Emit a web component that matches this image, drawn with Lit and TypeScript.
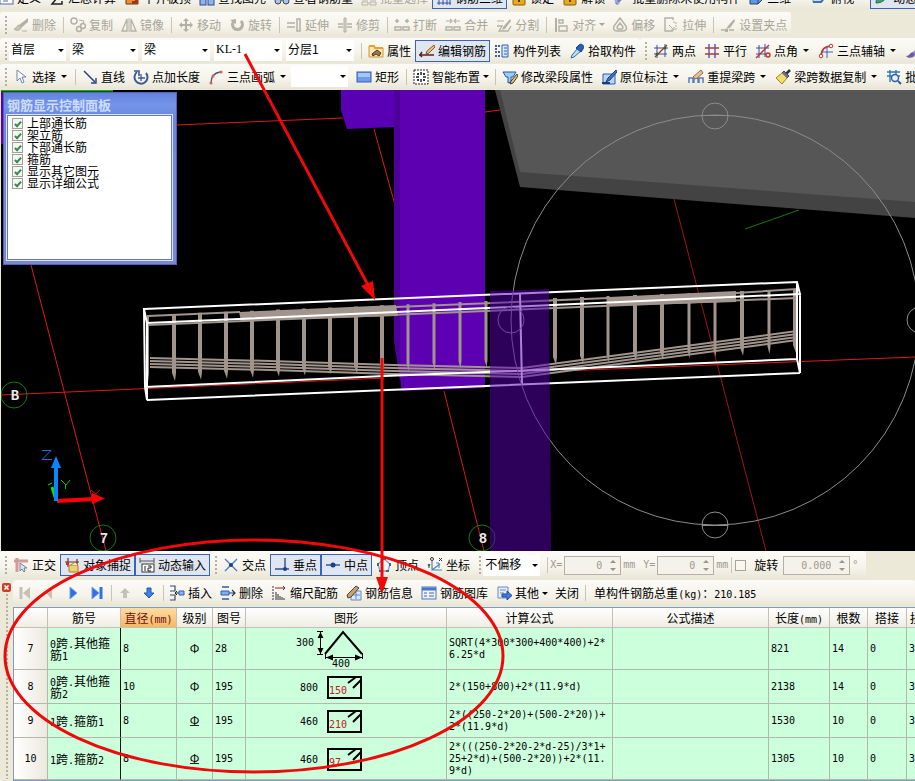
import { LitElement, html, svg, css, nothing, type TemplateResult, type SVGTemplateResult } from "lit";
import { customElement, property } from "lit/decorators.js";
import { classMap } from "lit/directives/class-map.js";

/* ---------- icons, each on a 16 x 16 grid ---------- */
const G = "#b3b0a4";
const B = "#2f5fb8";
const R = "#c03434";
const K = "#333333";

const lock = svg`<path d="M4 8V4a4 4 0 0 1 8 0v4" fill="none" stroke="#8a7430" stroke-width="2"/><rect x="2" y="6" width="12" height="9" rx="1" fill="#e9a91c" stroke="#8a5a08"/><path d="M8 9v3" stroke="#5a3a00" stroke-width="2"/>`;

const icons: Record<string, SVGTemplateResult> = {
  define: svg`<rect x="2" y="2" width="13" height="12" fill="#fff" stroke="#4a68b0"/><path d="M5 5h7M5 8h7M5 11h5" stroke="#4a68b0"/>`,
  sum: svg`<path d="M13 4V2H3l5 6-5 6h10v-3" fill="none" stroke="#222" stroke-width="1.5"/>`,
  level: svg`<path d="M2 14V9h4V6h4V3h4v11z" fill="#e89038" stroke="#7a3010"/><path d="M2 14h6v-3h3V8h3v6z" fill="#a03818"/>`,
  find: svg`<rect x="1" y="5" width="6" height="10" fill="#8fb4e8" stroke="#2a4a98"/><rect x="9" y="5" width="6" height="10" fill="#8fb4e8" stroke="#2a4a98"/><path d="M7 8h2" stroke="#2a4a98" stroke-width="2"/>`,
  glasses: svg`<circle cx="4" cy="11" r="3" fill="#a8c4ea" stroke="#444"/><circle cx="12" cy="11" r="3" fill="#a8c4ea" stroke="#444"/><path d="M7 10h2" stroke="#444"/>`,
  batch: svg`<path d="M1 6h6v4H1zM9 6h6v4H9zM1 12h6v3H1zM9 12h6v3H9z" fill="none" stroke="${G}"/>`,
  cage: svg`<path d="M1 5h14M1 13h14M3 3v12M7 3v12M11 3v12M14 3v12" fill="none" stroke="#3a4ea8"/>`,
  lock,
  wand: svg`<path d="M3 14l9-10" stroke="#7080b0" stroke-width="3"/><path d="M2 10l4 4" stroke="#a8a0d0" stroke-width="2"/>`,
  cube: svg`<path d="M2 6l4-4h8v8l-4 4H2z" fill="#5f98d8" stroke="#22487e"/><path d="M2 6h8l4-4M10 6v8" fill="none" stroke="#22487e"/>`,
  topview: svg`<path d="M2 8l5-5h8l-5 9H2z" fill="#cfe0f4" stroke="#6a88b8"/><path d="M2 12h8l5-6" fill="none" stroke="#3f6fae" stroke-width="2"/>`,
  orbit: svg`<path d="M2 13C2 6 8 3 14 2c-1 7-5 11-12 11z" fill="#40a070" stroke="#207048"/>`,

  erase: svg`<path d="M15 1L6 8l2 3 7-6z" fill="${G}"/><path d="M6 8c-2 0-2 3-5 4 2 2 6 2 7-1z" fill="#c6c3b7" stroke="${G}"/><path d="M9 14h5" stroke="${G}"/>`,
  copy: svg`<circle cx="4" cy="4" r="3" fill="none" stroke="${G}" stroke-width="1.5"/><circle cx="9" cy="12" r="2.5" fill="none" stroke="${G}" stroke-width="1.5"/><circle cx="13" cy="9" r="2.5" fill="none" stroke="${G}" stroke-width="1.5"/><path d="M9 3l5 1-1 3" fill="none" stroke="${G}"/>`,
  mirror: svg`<path d="M6 2v12H1zM10 2v12h5z" fill="none" stroke="${G}" stroke-width="1.3"/><path d="M8 1v14" stroke="${G}"/>`,
  move: svg`<path d="M8 1l3 3H9v3h3V5l3 3-3 3V9H9v3h2l-3 3-3-3h2V9H4v2L1 8l3-3v2h3V4H5z" fill="${G}"/>`,
  rotate: svg`<path d="M5 4a5 5 0 1 0 7 0" fill="none" stroke="${G}" stroke-width="3"/><path d="M1 3l6-1v5z" fill="${G}"/>`,
  extend: svg`<path d="M1 6h8M1 10h8" stroke="${G}" stroke-width="1.5"/><path d="M11 2h3v12h-3z" fill="none" stroke="${G}" stroke-width="1.5"/>`,
  trim: svg`<path d="M1 7h5M1 10h5M10 7h5M10 10h5" stroke="${G}" stroke-width="1.4"/><path d="M7 1h2v14H7z" fill="#d8d5ca" stroke="${G}"/>`,
  split: svg`<path d="M1 4h4M11 4h4M3 2v4M13 2v4" stroke="${G}" stroke-width="1.5"/><path d="M1 10h6v3H1zM9 10h6v3H9z" fill="none" stroke="${G}" stroke-width="1.4"/>`,
  merge: svg`<path d="M1 4h5M10 4h5M5 2l2 2-2 2M11 2L9 4l2 2" fill="none" stroke="${G}" stroke-width="1.2"/><path d="M1 10h6v3H1zM9 10h6v3H9z" fill="none" stroke="${G}" stroke-width="1.4"/>`,
  divide: svg`<path d="M1 9h5l-3 5h9l3-5" fill="none" stroke="${G}" stroke-width="1.3"/><path d="M14 2L7 10l-1 3 3-1 6-8z" fill="${G}"/><path d="M1 4h7" stroke="${G}"/>`,
  align: svg`<path d="M3 1v14" stroke="${G}" stroke-width="2"/><path d="M6 3h4v3H6zM6 9h8v5H6z" fill="none" stroke="${G}" stroke-width="1.4"/>`,
  offset: svg`<path d="M8 1l6 8c1 3 0 5-3 5H5c-3 0-4-2-3-5z" fill="none" stroke="${G}" stroke-width="1.5"/><path d="M8 6l3 4c0 1 0 2-1 2H6c-1 0-1-1-1-2z" fill="none" stroke="${G}" stroke-width="1.5"/>`,
  stretch: svg`<path d="M10 3V1H2v13h8" fill="none" stroke="${G}" stroke-width="1.4"/><path d="M10 5h3v9" fill="none" stroke="${G}" stroke-dasharray="2 1"/><path d="M6 8l5 5M11 10v3H8" fill="none" stroke="${G}"/>`,
  grip: svg`<path d="M14 2L8 9l-2 3 4-1 5-7z" fill="${G}"/><path d="M1 13h4M9 13h5" stroke="${G}" stroke-width="1.4"/><path d="M5 12h3v3H5z" fill="${G}"/>`,

  props: svg`<path d="M1 3h5l1 2h8v9H1z" fill="#fbe7b4" stroke="#d8902c"/><path d="M1 3h5l1 2h8" fill="none" stroke="#e8a030" stroke-width="2"/><path d="M4 11l5-4 4 3-2 3-3-2-3 2z" fill="#9a7a50" stroke="#4a3620"/>`,
  editbar: svg`<path d="M15 2L8 8l-1 3 3-1 6-6z" fill="#efc070" stroke="#8a5a28"/><path d="M0 12h15M3 9l-2 3 2 2" fill="none" stroke="#5a2020" stroke-width="1.5"/>`,
  list: svg`<path d="M8 2h6v12H8z" fill="#d8e6fa" stroke="${B}"/><path d="M10 5h3M10 8h3M10 11h3" stroke="${B}"/><path d="M1 3h2M4 3h2M1 6h2M1 9h2M4 9h2M1 13h2M4 13h2" stroke="#3a5ea8" stroke-width="2"/>`,
  pick: svg`<path d="M9 5l3 3-7 6-3 1 1-3z" fill="#b8dcf4" stroke="#2f6cb0"/><path d="M10 2c2-2 6 0 4 4l-2 3-5-4z" fill="#2562b8" stroke="#153f80"/>`,
  twopt: svg`<path d="M4 2v13M12 1v13M1 5h14M1 11h13" stroke="#3b4f9c"/><path d="M2 14L14 2" stroke="#a03030" stroke-width="1.3"/><circle cx="12" cy="5" r="1.5" fill="#2c6a2c"/><circle cx="4" cy="11" r="1.5" fill="#2c6a2c"/>`,
  parallel: svg`<path d="M5 1v14M11 1v14" stroke="#3b5fc0" stroke-width="1.4"/><path d="M1 5h14M1 11h14" stroke="${R}" stroke-width="1.5"/>`,
  ptangle: svg`<path d="M4 2v13M10 1v13M1 5h13M1 11h10" stroke="#3b4f9c"/><path d="M1 15L14 2" stroke="${R}" stroke-width="1.4"/><circle cx="13" cy="12" r="2" fill="none" stroke="${R}" stroke-width="1.4"/>`,
  threept: svg`<path d="M3 14C3 7 6 3 14 3" fill="none" stroke="${R}" stroke-width="1.6"/><path d="M9 4v11M3 9h12" stroke="#3b5fc0"/><circle cx="3" cy="13" r="1.8" fill="#fff" stroke="${R}"/><circle cx="13" cy="3" r="1.8" fill="#fff" stroke="${R}"/>`,
  brushx: svg`<path d="M15 3L8 9l2 3 6-6z" fill="#9088b8"/><path d="M8 9c-3 0-3 4-7 4 2 3 8 2 9-1z" fill="#6a5aa8"/>`,

  cursor: svg`<path d="M4 1v11l3-3 2 5 2-1-2-5h4z" fill="#fff" stroke="#6d83b4"/>`,
  line: svg`<path d="M2 2l11 11" stroke="#2b3f86" stroke-width="1.5"/><path d="M14 9v5H9" fill="none" stroke="#2b3f86" stroke-width="1.4"/>`,
  ptlen: svg`<path d="M4 3a6.500 6.500 0 1 0 9 1" fill="none" stroke="#3b5a92" stroke-width="2"/><path d="M1 2h5v5" fill="none" stroke="#3b5a92" stroke-width="1.6"/><path d="M8 5v7M5 9h7" stroke="#3b5a92" stroke-width="1.3"/>`,
  arc: svg`<path d="M3 14C3 8 6 4 12 3" fill="none" stroke="#44538c" stroke-width="1.3"/><circle cx="3" cy="14" r="1.5" fill="#e06050"/><circle cx="5" cy="7" r="1.5" fill="#e06050"/><circle cx="13" cy="3" r="1.500" fill="#e06050"/>`,
  rect: svg`<rect x="1" y="3" width="14" height="10" fill="#6f9cea" stroke="#2f5fb8"/><path d="M2 4h12v4H2z" fill="#a8c4f6"/>`,
  smart: svg`<rect x="1" y="1" width="14" height="14" fill="#fff" stroke="#222" stroke-dasharray="2 1"/><path d="M8 3v3M8 10v3M3 8h3M10 8h3" stroke="#222" stroke-width="1.5"/><path d="M4 4h2v2H4zM10 4h2v2h-2zM4 10h2v2H4zM10 10h2v2h-2z" fill="#333"/>`,
  beamprop: svg`<path d="M1 3h13l-3 5H9v5l-3 1V8H4z" fill="#9ecbf2" stroke="#2b5a9e"/><path d="M15 5l-6 7-1 3 3-1 5-7z" fill="#e8c070" stroke="#3a3a3a"/>`,
  mark: svg`<path d="M2 5h12v10H2z" fill="#bcd4f4" stroke="${B}"/><path d="M15 1L7 9l-2 4 4-2 7-8z" fill="#3b74c0" stroke="#1c3f7a"/><path d="M1 14h8" stroke="#1c3f7a" stroke-width="2"/>`,
  respan: svg`<path d="M1 14V9h4v5M6 14V9h4v5M11 14V9h4v5" fill="none" stroke="#5a7cc0" stroke-width="1.5"/><path d="M13 1L5 8l3 2 7-6z" fill="#ecc28a" stroke="#9a6a40"/>`,
  broom: svg`<path d="M15 1l-4 4" stroke="#333" stroke-width="2.500"/><path d="M9 2l5 5-2 2-5-5z" fill="#6a6ab0" stroke="#444"/><path d="M7 4l5 5-5 6-6-6z" fill="#f0dc6c" stroke="#a08820"/>`,
  batchmark: svg`<path d="M1 3h13M1 7h13M4 1v12M10 1v6" stroke="#2f78b8" stroke-width="1.4"/><circle cx="9" cy="9" r="3.500" fill="#e4f0fa" stroke="#2f5f9c" stroke-width="1.400"/><path d="M12 12l3 3" stroke="#2f5f9c" stroke-width="2"/>`,

  ortho: svg`<path d="M1 4h14M4 1v14" stroke="#d49a96" stroke-width="3"/><path d="M7 6v8l2-2 2 3 1-1-1-3h3z" fill="#d8e6f4" stroke="#6d83a8"/>`,
  osnap: svg`<path d="M1 5h14M4 1v9M13 2v9" stroke="#6a3030" stroke-width="1.2"/><rect x="5" y="8" width="9" height="7" rx="1" fill="#f0d070" stroke="#a08030"/><path d="M7 8l4-3 3 3" fill="#fff0b0" stroke="#a08030"/><path d="M2 5h3v3H2z" fill="${R}"/>`,
  dyn: svg`<path d="M1 1v5M15 1v5M1 4h14" stroke="#555"/><rect x="3" y="7" width="12" height="8" fill="#fff" stroke="#333"/><path d="M6 9v5M9 9h3v2H9v3h3" fill="none" stroke="#222"/>`,
  cross: svg`<path d="M2 2l12 12M14 2L2 14" stroke="#4a78c0" stroke-width="1.300"/><circle cx="8" cy="8" r="2" fill="#1c3f8a"/>`,
  perp: svg`<path d="M11 1v11M1 12h14" stroke="#24509c" stroke-width="1.4"/><circle cx="11" cy="12" r="2" fill="#1c3f8a"/>`,
  mid: svg`<path d="M1 8h14" stroke="#24509c" stroke-width="1.400"/><circle cx="8" cy="8" r="2.500" fill="#1c3f8a"/>`,
  vertex: svg`<path d="M8 2l6 5-2 7H4L2 7z" fill="none" stroke="#7aa0cc" stroke-width="1.3"/><path d="M7 1h3v2H7zM1 6h2v3H1zM13 6h2v3h-2zM3 13h3v2H3zM10 13h3v2h-3z" fill="#35689c"/>`,
  coord: svg`<path d="M5 4v9h10M5 13l8-6" fill="none" stroke="#4a88b8" stroke-width="1.2"/><circle cx="5" cy="2" r="1.500" fill="none" stroke="#333"/><path d="M12 1l3 3M15 1l-3 3M1 7l1 2 1-2M2 9v2" fill="none" stroke="#333"/><path d="M9 6h3v5" fill="none" stroke="#4a88b8"/>`,

  first: svg`<path d="M4 2v12" stroke="#c4c1b5" stroke-width="3"/><path d="M13 2v12L6 8z" fill="#c4c1b5"/>`,
  prev: svg`<path d="M11 2v12L5 8z" fill="#c4c1b5"/>`,
  next: svg`<path d="M5 2v12l7-6z" fill="#2f6fe0" stroke="#6fa0f0"/>`,
  last: svg`<path d="M3 2v12l7-6z" fill="#2f6fe0" stroke="#6fa0f0"/><path d="M12 2v12" stroke="#2f6fe0" stroke-width="3"/>`,
  up: svg`<path d="M8 3l5 5h-3v5H6V8H3z" fill="#c4c1b5"/>`,
  down: svg`<path d="M8 13L3 8h3V3h4v5h3z" fill="#3f7fe8" stroke="#2456b0"/>`,
  insert: svg`<path d="M1 1h5v5H1M1 10h5v5H1" fill="none" stroke="#3a4a6a" stroke-width="1.200"/><path d="M6 8h4M8 6L6 8l2 2" fill="none" stroke="#222"/><path d="M10 6h5v4h-5z" fill="#8ab4f0" stroke="${B}"/>`,
  remove: svg`<path d="M2 2h7M2 14h7" stroke="#3a5a9a" stroke-width="1.500"/><path d="M1 6h8v4H1z" fill="#7fb0ee" stroke="${B}"/><path d="M9 8h6M12 5l3 3-3 3" fill="none" stroke="#223a6a" stroke-width="1.200"/>`,
  scale: svg`<path d="M2 1v14" stroke="${K}" stroke-dasharray="2 1"/><path d="M4 3h10M12 1l2 2-2 2" fill="none" stroke="#8a2020"/><path d="M5 7v8M7 9v6M9 11v4M11 12v3M13 13v2" stroke="#333"/>`,
  barinfo: svg`<path d="M5 6h10v9H5z" fill="#dceafc" stroke="#5a88cc"/><path d="M7 10h7M10 7v7" stroke="#5a88cc"/><path d="M10 1L1 10l1 3 3-1 8-9z" fill="#c8a078" stroke="#5a4030"/>`,
  barlib: svg`<rect x="1" y="2" width="14" height="12" fill="#eaf2fe" stroke="#4a78c0"/><path d="M1 4h14" stroke="#4a78c0" stroke-width="3"/><path d="M3 8h3M3 11h3M8 8h5M8 11h5" stroke="#55668a"/>`,
  other: svg`<path d="M2 2h10v11H2z" fill="#e4eefc" stroke="#6a88b8"/><path d="M4 5h6M4 8h4" stroke="#6a88b8"/><path d="M6 9h5V6l5 4.500-5 4.500v-3H6z" fill="#3f78e0" stroke="#1f4aa0"/>`,
};

const base = css`
  :host { box-sizing: border-box; }
  *, *::before, *::after { box-sizing: border-box; }
  button, input, select { font: inherit; color: inherit; margin: 0; }
  .m, .n { font-family: "DejaVu Sans Mono", monospace; font-size: 10px; }
  .n { line-height: 0; }
`;

/** Sets runs of Latin text in the half-width face used beside the Chinese glyphs. */
const mix = (text: string): (string | TemplateResult)[] =>
  text.split(/([\x21-\x7e]+)/).filter(Boolean).map((part) =>
    /^[\x21-\x7e]/.test(part) ? html`<span class="n">${part}</span>` : part);

@customElement("tool-button")
class ToolButton extends LitElement {
  @property() icon = "";
  @property() label = "";
  @property() hint = "";
  @property({ type: Boolean }) active = false;
  @property({ type: Boolean }) off = false;
  @property() menu = "";

  static styles = [base, css`
    :host { display: block; flex: none; }
    button {
      display: flex; align-items: center; gap: 3px; height: 22px; padding: 0 3px;
      border: 1px solid transparent; background: none; white-space: nowrap; line-height: 16px;
    }
    button.active { border-color: #3a62b8; background: #e0e6f0; }
    button.off { color: #a8a598; }
    svg { display: block; width: 16px; height: 16px; flex: none; }
    .caret { width: 9px; display: flex; justify-content: center; }
    .narrow .caret { width: 5px; }
    .caret::before { content: ""; border: 3px solid transparent; border-top-color: currentColor; border-bottom: 0; }
  `];

  render() {
    return html`<button
      class=${classMap({ active: this.active, off: this.off, narrow: this.menu === "narrow" })}
      ?disabled=${this.off} aria-label=${this.label || this.hint}>
      ${this.icon ? html`<svg viewBox="0 0 16 16" aria-hidden="true">${icons[this.icon]}</svg>` : nothing}
      ${this.label ? html`<span>${this.label}</span>` : nothing}
      ${this.menu ? html`<span class="caret"></span>` : nothing}
    </button>`;
  }
}

type Item =
  | "|"
  | { icon?: string; label?: string; hint?: string; active?: boolean; off?: boolean; menu?: "wide" | "narrow" }
  | { pick: string; name: string; size?: "short" };

const topItems: Item[] = [
  { icon: "define", label: "定义" }, { icon: "sum", label: "汇总计算" }, { icon: "level", label: "平齐板顶" },
  { icon: "find", label: "查找图元" }, { icon: "glasses", label: "查看钢筋量" },
  { icon: "batch", label: "批量选择", off: true }, { icon: "cage", label: "钢筋三维", active: true },
  { icon: "lock", label: "锁定" }, { icon: "lock", label: "解锁" }, { icon: "wand", label: "批量删除未使用构件" },
  { icon: "cube", label: "三维", menu: "wide" }, { icon: "topview", label: "俯视", menu: "wide" },
  { icon: "orbit", label: "动态观察", active: true },
];
const editItems: Item[] = [
  { icon: "erase", label: "删除", off: true }, "|", { icon: "copy", label: "复制", off: true },
  { icon: "mirror", label: "镜像", off: true }, "|", { icon: "move", label: "移动", off: true },
  { icon: "rotate", label: "旋转", off: true }, "|", { icon: "extend", label: "延伸", off: true },
  { icon: "trim", label: "修剪", off: true }, "|", { icon: "split", label: "打断", off: true },
  { icon: "merge", label: "合并", off: true }, { icon: "divide", label: "分割", off: true }, "|",
  { icon: "align", label: "对齐", off: true, menu: "narrow" }, { icon: "offset", label: "偏移", off: true },
  { icon: "stretch", label: "拉伸", off: true }, "|", { icon: "grip", label: "设置夹点", off: true },
];
const componentItems: Item[] = [
  { pick: "首层", name: "楼层", size: "short" }, { pick: "梁", name: "构件类别" }, { pick: "梁", name: "构件类型" },
  { pick: "KL-1", name: "构件" }, { pick: "分层1", name: "分层" }, "|",
  { icon: "props", label: "属性" }, { icon: "editbar", label: "编辑钢筋", active: true },
  { icon: "list", label: "构件列表" }, { icon: "pick", label: "拾取构件" },
];
const axisItems: Item[] = [
  { icon: "twopt", label: "两点" }, { icon: "parallel", label: "平行" },
  { icon: "ptangle", label: "点角", menu: "wide" }, { icon: "threept", label: "三点辅轴", menu: "wide" },
  { icon: "brushx", hint: "删除辅轴" },
];
const drawItems: Item[] = [
  { icon: "cursor", label: "选择", menu: "wide" }, "|", { icon: "line", label: "直线" },
  { icon: "ptlen", label: "点加长度" }, { icon: "arc", label: "三点画弧", menu: "wide" },
  { pick: "", name: "画法", size: "short" }, { icon: "rect", label: "矩形" }, "|",
  { icon: "smart", label: "智能布置", menu: "narrow" }, "|", { icon: "beamprop", label: "修改梁段属性" },
  { icon: "mark", label: "原位标注", menu: "wide" }, { icon: "respan", label: "重提梁跨", menu: "wide" },
  { icon: "broom", label: "梁跨数据复制", menu: "wide" }, { icon: "batchmark", label: "批量识别" },
];
const snapItems: Item[] = [
  { icon: "ortho", label: "正交" }, { icon: "osnap", label: "对象捕捉", active: true },
  { icon: "dyn", label: "动态输入", active: true },
];
const pointItems: Item[] = [
  { icon: "cross", label: "交点" }, { icon: "perp", label: "垂点", active: true },
  { icon: "mid", label: "中点", active: true }, { icon: "vertex", label: "顶点" }, { icon: "coord", label: "坐标" },
];
const barItems: Item[] = [
  { icon: "first", hint: "首行", off: true }, { icon: "prev", hint: "上一行", off: true },
  { icon: "next", hint: "下一行" }, { icon: "last", hint: "末行" }, "|",
  { icon: "up", hint: "上移", off: true }, { icon: "down", hint: "下移" }, "|",
  { icon: "insert", label: "插入" }, { icon: "remove", label: "删除" }, { icon: "scale", label: "缩尺配筋" },
  { icon: "barinfo", label: "钢筋信息" }, { icon: "barlib", label: "钢筋图库" },
  { icon: "other", label: "其他", menu: "narrow" }, { label: "关闭" }, "|",
];

const renderItem = (item: Item) => {
  if (item === "|") return html`<span class="sep"></span>`;
  if ("pick" in item) {
    return html`<span class=${classMap({ combo: true, short: item.size === "short" })}>
      <select class=${classMap({ latin: /^[A-Z]/.test(item.pick) })} aria-label=${item.name}><option>${item.pick}</option></select>
    </span>`;
  }
  return html`<tool-button .icon=${item.icon ?? ""} .label=${item.label ?? ""} .hint=${item.hint ?? ""}
    .menu=${item.menu ?? ""} ?active=${item.active ?? false} ?off=${item.off ?? false}></tool-button>`;
};

/* ---------- model view ---------- */
const lerp = (a: number, b: number, t: number) => a + (b - a) * t;
const leftStirrups = Array.from({ length: 14 }, (_, i) => ({
  x: 148 + i * 26, top: lerp(315, 301, i / 13), end: lerp(382, 368, i / 13), w: i === 0 ? 2 : i < 10 ? 4 : 3,
}));
const rightStirrups = Array.from({ length: 10 }, (_, i) => ({
  x: 555 + Math.round(i * 26.7), top: lerp(298, 289, i / 9), end: lerp(365, 353, i / 9),
  w: [4, 4, 3, 4, 4, 3, 3, 4, 3, 4][i],
}));

@customElement("model-view")
class ModelView extends LitElement {
  static styles = [base, css`
    :host { display: block; position: relative; background: #000; overflow: hidden; border-left: 1px solid #ece9d8; }
    .scene { position: absolute; inset: 0; width: 100%; height: 100%; display: block; }
    .axis { stroke: #e01818; fill: none; }
    .dim { stroke: #a01414; }
    .edge { stroke: #fff; stroke-width: 2; fill: none; }
    .bar { stroke: #a0948c; stroke-width: 2; fill: none; }
    .solid { fill: #a0948c; }
    .ring { stroke: #8c8c8c; fill: none; }
    .bubble { stroke: #147814; fill: none; }
    .mark { fill: #e8e8e8; font: bold 14px "Liberation Mono", monospace; text-anchor: middle; }
    .panel {
      position: absolute; left: 2px; top: 2px; width: 174px; height: 173px; padding: 1px 4px 4px 3px;
      background: linear-gradient(#6484dc, #7494ea 12px, #6c88e0 24px, #7a88d4); border: 1px solid #5460c0;
      display: flex; flex-direction: column;
    }
    .panel h2 { margin: 0; font-size: 13px; line-height: 21px; font-weight: bold; color: #ccdcfa; }
    .panel ul {
      flex: 1; margin: 0; padding: 1px 4px; list-style: none; background: #fff; border: 1px solid #6878c0;
      box-shadow: 0 0 0 1px #dce4fa;
    }
    .panel li { height: 12px; }
    .panel label { display: flex; align-items: center; gap: 4px; line-height: 12px; height: 12px; }
    .panel input {
      appearance: none; width: 11px; height: 11px; border: 1px solid #a0a098; background: #f4f8f2;
      display: grid; place-items: center;
    }
    .panel input:checked::before {
      content: ""; width: 4px; height: 7px; border: solid #3c8a4c; border-width: 0 2px 2px 0;
      transform: rotate(42deg);
    }
  `];

  render() {
    const options = ["上部通长筋", "架立筋", "下部通长筋", "箍筋", "显示其它图元", "显示详细公式"];
    return html`
      <svg class="scene" viewBox="1 90 914 461" preserveAspectRatio="xMidYMid slice" role="img" aria-label="梁钢筋三维">
        <path d="M1 90.500h112" stroke="#18a818" stroke-width="2" />
        <path d="M1 92h3v52h-3z" fill="#5a00b4" />
        <path class="axis" d="M176 125L343 118M485 112L500 110M31 265L106 551M374 129L395 205M444 391L484 551" />
        <path class="axis" d="M1 395L384 378M560 371L915 357" />
        <path class="axis dim" d="M674 199L766 551" />
        <path d="M495 90H915V218L520 187Z" fill="#434343" />
        <path d="M500 90H915V202L520 172Z" fill="#565656" />
        <path d="M745 229L799 210" stroke="#147814" />
        <path d="M341 90H395V127L347 129L341 110Z" fill="#5a00b4" />
        <path d="M394 90H485V388L402 391L394 340Z" fill="#5c00b2" />
        <path d="M394 90H400V380L394 340Z" fill="#4c0098" />
        <circle class="bubble" cx="482" cy="538" r="13" />
        <text class="mark" x="483" y="543">8</text>

        ${leftStirrups.concat(rightStirrups).map((s) => svg`
          <path class="solid" d="M${s.x - s.w / 2} ${s.top}h${s.w}V${s.end - 8}l-1 8l-${s.w - 1} -8z" />`)}
        <path class="bar" d="M148 316L240 312M396 307L609 298M736 293L797 289M148 325L797 298" />
        <path class="solid" d="M239 312L396 305L398 316L241 321ZM609 297L736 291L736 302L609 306Z" />
        ${[0, 3, 6, 9].map((d) => svg`
          <path class="bar" d="M150 ${358 + d}L270 ${361 + d}L393 ${365 + d}L522 ${368 + d}L797 ${331 + d}" />`)}
        <path class="edge" d="M144 309L797 282L800 294L147 323ZM145 387L384 376L563 369L797 359M147 400L800 373M144 309L145 387L147 400V323M797 282V359L800 373V294" />
        <path class="edge" d="M520 294L522 385" />
        <ellipse class="ring" cx="715" cy="320" rx="204" ry="205" />
        <circle class="ring" cx="715" cy="116" r="13" /><path class="ring" d="M702 115.500h26" />
        <circle class="ring" cx="715" cy="525" r="13" /><path class="ring" d="M702 525.500h26" />
        <circle class="ring" cx="511" cy="320" r="13" /><circle class="ring" cx="920" cy="320" r="13" />
        <path d="M490 291L549 289L551 551H490Z" fill="#5a00b4" opacity="0.500" />

        <circle class="bubble" cx="14" cy="395" r="13" /><text class="mark" x="15" y="400">B</text>
        <circle class="bubble" cx="103" cy="538" r="13" /><text class="mark" x="104" y="543">7</text>
        <path d="M57 501L95 499" stroke="#f00" stroke-width="4" /><path d="M92 493l13 5.500-13 5.500z" fill="#f00" />
        <path d="M52 487L56 500" stroke="#10e010" stroke-width="3" /><path d="M48 485l4-2" stroke="#10e010" />
        <path d="M56 501V464" stroke="#0a84ff" stroke-width="4" /><path d="M56 456l5 12H51z" fill="#0a84ff" />
        <path d="M42 450.500h9l-9 9h10" fill="none" stroke="#1c70d8" />
        <path d="M61 480l5 5 4-5M65.500 485v4" fill="none" stroke="#10c010" />
        <path d="M91 490l9 8M100 490l-9 8" stroke="#c01414" />
      </svg>
      <section class="panel">
        <h2>钢筋显示控制面板</h2>
        <ul>${options.map((o) => html`<li><label><input type="checkbox" checked />${o}</label></li>`)}</ul>
      </section>`;
  }
}

/* ---------- rebar table ---------- */
interface Bar {
  no: number; name: string; dia: number; grade: "Ⅰ" | "Ⅱ"; fig: number; tall: number; wide: number;
  formula: string; length: number; count: number;
}
const bars: Bar[] = [
  { no: 7, name: "0跨.其他箍筋1", dia: 8, grade: "Ⅰ", fig: 28, tall: 300, wide: 400, formula: "SQRT(4*300*300+400*400)+2*6.25*d", length: 821, count: 14 },
  { no: 8, name: "0跨.其他箍筋2", dia: 10, grade: "Ⅰ", fig: 195, tall: 800, wide: 150, formula: "2*(150+800)+2*(11.9*d)", length: 2138, count: 14 },
  { no: 9, name: "1跨.箍筋1", dia: 8, grade: "Ⅱ", fig: 195, tall: 460, wide: 210, formula: "2*((250-2*20)+(500-2*20))+2*(11.9*d)", length: 1530, count: 10 },
  { no: 10, name: "1跨.箍筋2", dia: 8, grade: "Ⅱ", fig: 195, tall: 460, wide: 97, formula: "2*(((250-2*20-2*d-25)/3*1+25+2*d)+(500-2*20))+2*(11.9*d)", length: 1305, count: 10 },
];

@customElement("rebar-table")
class RebarTable extends LitElement {
  static styles = [base, css`
    :host { display: block; overflow: hidden; border: solid #7f9db9; border-width: 1px 0 1px 1px; background: #ccffdc; }
    table { border-collapse: separate; border-spacing: 0; table-layout: fixed; width: calc(100% + 40px); }
    th, td { border: solid #b4b8ac; border-width: 0 1px 1px 0; padding: 0 6px 0 2px; text-align: left; line-height: 12px; font-weight: normal; overflow: hidden; white-space: normal; }
    thead th { height: 20px; padding: 0; text-align: center; background: linear-gradient(#fff, #f0ede4); border-color: #c4c1b4; white-space: nowrap; }
    thead th.sel { background: linear-gradient(#fcdca4, #f8b860); color: #6a1020; }
    thead th.cut { text-align: left; padding-left: 3px; }
    tbody th { padding: 0; text-align: center; background: linear-gradient(90deg, #fff, #ece9de); }
    tbody tr { height: 34px; }
    tbody tr.high, tbody tr:last-child { height: 42px; }
    td.name { border-right: 1px solid #111; }
    td.formula { line-break: anywhere; }
    td.grade { text-align: center; padding: 0 0 2px; }
    .hrb { border-bottom: 1px solid #222; display: inline-block; line-height: 10px; }
    td.figure { padding: 0; }
    td.figure svg { display: block; margin: 0 auto; }
    .ink { fill: none; stroke: #000; stroke-width: 2; }
    .thin { fill: none; stroke: #000; }
    text { font: 10px "DejaVu Sans Mono", monospace; }
    .red { fill: #c02020; }
    .c-no { width: 34px; } .c-name { width: 73px; } .c-dia { width: 56px; } .c-grade { width: 36px; }
    .c-fig { width: 33px; } .c-shape { width: 201px; } .c-formula { width: 166px; } .c-len { width: 61px; }
    .c-count { width: 38px; } .c-lap { width: 39px; } .c-loss { width: 48px; }
  `];

  private figure(bar: Bar) {
    return bar.fig === 28
      ? html`<svg width="100" height="40" viewBox="0 0 100 40" role="img" aria-label="箍筋图形">
          <text x="0" y="17">${bar.tall}</text><text x="36" y="38">${bar.wide}</text>
          <path class="ink" d="M29 25L47 3L66 25" />
          <path class="thin" d="M21 2.500h6M21 25.500h6M24.500 3v22M29.500 24v6M66.500 24v6M30 28.500h36" />
          <path d="M24.500 3l3 6h-6zM24.500 25l3-6h-6zM30 28.500l7-3v6zM66 28.500l-7-3v6z" />
        </svg>`
      : html`<svg width="92" height="26" viewBox="0 0 92 26" role="img" aria-label="箍筋图形">
          <text x="0" y="17">${bar.tall}</text>
          <rect class="ink" x="28" y="3" width="33" height="21" />
          <path class="ink" d="M48 9L56 3M53 14L61 6" />
          <text class="red" x="29" y="20">${bar.wide}</text>
        </svg>`;
  }

  render() {
    const heads: [string, string][] = [
      ["c-no", ""], ["c-name", "筋号"], ["c-dia sel", "直径(mm)"], ["c-grade", "级别"], ["c-fig", "图号"],
      ["c-shape", "图形"], ["c-formula", "计算公式"], ["c-desc", "公式描述"], ["c-len", "长度(mm)"],
      ["c-count", "根数"], ["c-lap", "搭接"], ["c-loss cut", "损耗(%)"],
    ];
    return html`<table>
      <thead><tr>${heads.map(([c, t]) => html`<th class=${c} scope="col">${mix(t)}</th>`)}</tr></thead>
      <tbody>${bars.map((b) => html`<tr class=${classMap({ high: b.fig === 28 })}>
        <th scope="row" class="m">${b.no}</th>
        <td class="name">${mix(b.name)}</td>
        <td class="m">${b.dia}</td>
        <td class="grade"><span class=${classMap({ hrb: b.grade === "Ⅱ" })}>Φ</span></td>
        <td class="m">${b.fig}</td>
        <td class="figure">${this.figure(b)}</td>
        <td class="formula m">${b.formula}</td>
        <td></td>
        <td class="m">${b.length}</td>
        <td class="m">${b.count}</td>
        <td class="m">0</td>
        <td class="m">3</td>
      </tr>`)}</tbody>
    </table>`;
  }
}

@customElement("app-root")
class AppRoot extends LitElement {
  static styles = [base, css`
    :host {
      display: flex; flex-direction: column; position: relative; min-height: 100vh; overflow: hidden;
      background: #ece9d8; color: #000; font: 12px/16px "Noto Sans CJK SC", sans-serif;
    }
    .row { display: flex; height: 26px; overflow: hidden; flex: none; }
    .row.first { height: 12px; align-items: flex-end; padding-bottom: 2px; }
    .bar { display: flex; align-items: center; flex: none; height: 25px; border-radius: 3px; background: linear-gradient(#fcfbf7, #f5f3ea 60%, #e9e6d7); }
    .first .bar { margin-left: -6px; }
    .fill { flex: 1 0 auto; }
    .bar .handle { width: 9px; height: 18px; flex: none; padding-left: 5px; }
    .handle::before { content: ""; display: block; width: 2px; height: 100%; background: repeating-linear-gradient(#b4b0a0 0 2px, transparent 2px 4px); }
    .sep { width: 1px; height: 16px; margin: 0 2px 0 3px; background: #c8c5b4; flex: none; }
    .combo { width: 68px; height: 21px; margin-right: 4px; background: #fff; position: relative; flex: none; display: block; }
    .combo.short { width: 57px; }
    .combo select { appearance: none; width: 100%; height: 21px; border: 0; padding: 0 12px 3px 2px; background: none; line-height: 16px; }
    .combo select.latin { font: 12px/16px "Liberation Serif", serif; }
    .combo::after { content: ""; position: absolute; right: 2px; top: 9px; border: 3px solid transparent; border-top-color: #000; border-bottom: 0; }
    model-view { flex: 1 0 461px; }
    .row.snap { height: 29px; }
    .snap .bar { height: 28px; }
    .field { display: flex; align-items: center; gap: 2px; color: #9c998c; }
    .field + .field { margin-left: 8px; }
    .num { width: 57px; height: 19px; border: 1px solid #b4b1a4; background: #f4f2ea; display: flex; align-items: center; padding-right: 4px; }
    .num.wide { width: 67px; }
    .num input { width: 100%; min-width: 0; border: 0; padding: 0 8px 0 0; background: none; text-align: right; color: #9c998c; font: 10px "DejaVu Sans Mono", monospace; }
    .spin { display: grid; gap: 5px; flex: none; }
    .spin::before, .spin::after { content: ""; border: 3px solid transparent; }
    .spin::before { border-bottom-color: #98958a; border-top: 0; }
    .spin::after { border-top-color: #98958a; border-bottom: 0; }
    .turn { display: flex; align-items: center; gap: 8px; margin: 0 5px 0 1px; }
    .turn input { appearance: none; width: 11px; height: 11px; border: 1px solid #a8a598; background: #f8f7f0; }
    .angle { padding-right: 8px; }
    .dock { display: flex; flex: none; }
    .gutter { width: 13px; flex: none; display: flex; flex-direction: column; align-items: center; gap: 2px; padding: 3px 0 2px; }
    .gutter button { width: 9px; height: 9px; padding: 0; border: 0; border-radius: 2px; background: #c8402c; }
    .gutter svg { display: block; width: 9px; height: 9px; }
    .dots { flex: 1; width: 2px; background: repeating-linear-gradient(#b4b0a0 0 2px, transparent 2px 4px); }
    .main { flex: 1; min-width: 0; }
    .main .row { height: 27px; }
    .main .bar { height: 26px; }
    .main .sep { margin: 0 1px 0 2px; }
    .total { margin-left: 7px; white-space: nowrap; }
    .notes { position: absolute; left: 0; top: 0; width: 100%; height: 100%; pointer-events: none; }
    .notes .stroke { fill: none; stroke: #ee0a0a; stroke-width: 3; }
    .notes .head { fill: #ee0a0a; }
  `];

  render() {
    return html`
      <div class="row first"><div class="bar fill">${topItems.map(renderItem)}</div></div>
      <div class="row"><div class="bar"><span class="handle"></span>${editItems.map(renderItem)}</div></div>
      <div class="row">
        <div class="bar"><span class="handle"></span>${componentItems.map(renderItem)}</div>
        <div class="bar fill"><span class="handle"></span>${axisItems.map(renderItem)}</div>
      </div>
      <div class="row"><div class="bar fill"><span class="handle"></span>${drawItems.map(renderItem)}</div></div>
      <model-view></model-view>
      <div class="row snap">
        <div class="bar"><span class="handle"></span>${snapItems.map(renderItem)}</div>
        <div class="bar"><span class="handle"></span>${pointItems.map(renderItem)}</div>
        <div class="bar">
          <span class="handle"></span>
          ${renderItem({ pick: "不偏移", name: "偏移方式", size: "short" })}
          <span class="sep"></span>
          ${["X", "Y"].map((axis) => html`<label class="field"><span class="m">${axis}=</span>
            <span class="num"><input type="text" value="0" disabled /><span class="spin"></span></span><span class="m">mm</span></label>`)}
          <span class="sep"></span>
          <label class="turn"><input type="checkbox" />旋转</label>
          <span class="field angle"><span class="num wide"><input type="text" value="0.000" aria-label="旋转角度" disabled /><span class="spin"></span></span><span class="m">°</span></span>
        </div>
      </div>
      <div class="dock">
        <div class="gutter">
          <button aria-label="关闭面板"><svg viewBox="0 0 9 9"><path d="M2.500 2.500l4 4M6.500 2.500l-4 4" stroke="#fff" stroke-width="1.500" /></svg></button>
          <span class="dots"></span>
        </div>
        <div class="main">
          <div class="row"><div class="bar fill">${barItems.map(renderItem)}
            <span class="total">${mix("单构件钢筋总重(kg)：210.185")}</span></div></div>
          <rebar-table></rebar-table>
        </div>
      </div>
      <svg class="notes" viewBox="0 0 915 781" preserveAspectRatio="xMinYMax meet" aria-hidden="true">
        <path class="stroke" d="M245 54L369 287M382 358V580" />
        <path class="head" d="M375 300L361 286L373 281ZM382 594L376 577H388Z" />
        <ellipse class="stroke" cx="254" cy="656" rx="249" ry="116" />
      </svg>`;
  }
}
